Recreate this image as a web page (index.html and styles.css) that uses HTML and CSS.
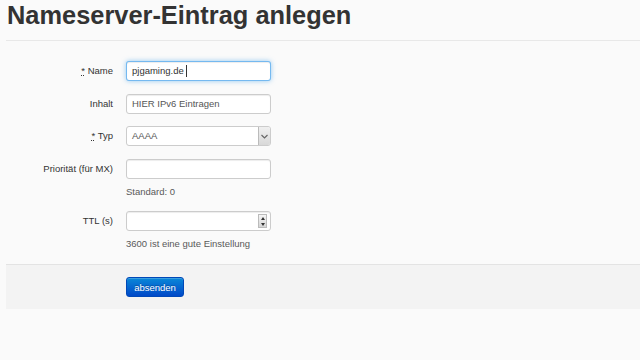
FILE: index.html
```html
<!DOCTYPE html>
<html lang="de">
<head>
  <meta charset="UTF-8">
  <meta name="viewport" content="width=device-width, initial-scale=1.0">
  <title>Nameserver-Eintrag anlegen</title>
  <link rel="stylesheet" href="styles.css">
</head>
<body>
  <div class="page">
    <h1>Nameserver-Eintrag anlegen</h1>

    <form class="form-horizontal">
      <div class="control-group">
        <label class="control-label"><abbr title="Pflichtfeld">*</abbr> Name</label>
        <div class="controls">
          <div class="input focus">pjgaming.de <span class="caret"></span></div>
        </div>
      </div>

      <div class="control-group">
        <label class="control-label">Inhalt</label>
        <div class="controls">
          <div class="input">HIER IPv6 Eintragen</div>
        </div>
      </div>

      <div class="control-group">
        <label class="control-label"><abbr title="Pflichtfeld">*</abbr> Typ</label>
        <div class="controls">
          <div class="input select">
            <span class="value">AAAA</span>
            <span class="select-arrow">
              <svg width="7" height="5" viewBox="0 0 7 5"><path d="M0.5 1 L3.5 4 L6.5 1" fill="none" stroke="#666" stroke-width="1.2"/></svg>
            </span>
          </div>
        </div>
      </div>

      <div class="control-group">
        <label class="control-label">Priorität (für MX)</label>
        <div class="controls">
          <div class="input"></div>
          <p class="help-block">Standard: 0</p>
        </div>
      </div>

      <div class="control-group">
        <label class="control-label">TTL (s)</label>
        <div class="controls">
          <div class="input number">
            <span class="spinner">
              <span class="spin-up"></span>
              <span class="spin-down"></span>
            </span>
          </div>
          <p class="help-block">3600 ist eine gute Einstellung</p>
        </div>
      </div>

      <div class="form-actions">
        <button type="button" class="btn-primary">absenden</button>
      </div>
    </form>
  </div>
</body>
</html>
```

FILE: styles.css
```css
body {
  margin: 0;
  background: #fafafa;
  font-family: "Liberation Sans", Arial, sans-serif;
  font-size: 9.5px;
  color: #333;
}
.page {
  padding-left: 6px;
}
h1 {
  margin: 0;
  padding: 1px 0 0 1px;
  font-size: 25.4px;
  line-height: 28px;
  font-weight: bold;
  color: #333;
  height: 39px;
  border-bottom: 1px solid #e8e8e8;
}
.form-horizontal {
  padding-top: 20px;
}
.control-group {
  display: flex;
  align-items: flex-start;
  margin-bottom: 12.5px;
}
.control-label {
  width: 107px;
  margin-right: 13px;
  text-align: right;
  line-height: 20px;
  color: #333;
}
abbr {
  text-decoration: underline dotted;
  border: none;
}
.controls {
  width: 145px;
}
.input {
  box-sizing: border-box;
  height: 20px;
  width: 145px;
  padding: 0 5px;
  line-height: 18px;
  background: #fff;
  border: 1px solid #ccc;
  border-radius: 3px;
  box-shadow: inset 0 1px 1px rgba(0, 0, 0, 0.075);
  color: #555;
  display: flex;
  align-items: center;
}
.focus {
  border-color: rgba(82, 168, 236, 0.8);
  box-shadow: inset 0 1px 1px rgba(0, 0, 0, 0.075), 0 0 5px rgba(82, 168, 236, 0.6);
  white-space: pre;
  color: #333;
}
.caret {
  display: inline-block;
  width: 1px;
  height: 12px;
  background: #333;
}
.select {
  padding-right: 0;
  justify-content: space-between;
  box-shadow: none;
}
.select-arrow {
  box-sizing: border-box;
  width: 12px;
  height: 18px;
  border-left: 1px solid #bbb;
  background: linear-gradient(#f0f0f0, #d8d8d8);
  border-radius: 0 2px 2px 0;
  display: flex;
  align-items: center;
  justify-content: center;
}
.number {
  justify-content: flex-end;
  padding-right: 3px;
}
.spinner {
  box-sizing: border-box;
  width: 9px;
  height: 14px;
  border: 1px solid #bbb;
  background: linear-gradient(#f5f5f5, #d5d5d5);
  display: flex;
  flex-direction: column;
  align-items: center;
  justify-content: space-around;
}
.spin-up {
  width: 0;
  height: 0;
  border-left: 2.5px solid transparent;
  border-right: 2.5px solid transparent;
  border-bottom: 3px solid #333;
}
.spin-down {
  width: 0;
  height: 0;
  border-left: 2.5px solid transparent;
  border-right: 2.5px solid transparent;
  border-top: 3px solid #333;
}
.help-block {
  margin: 6px 0 1.3px;
  line-height: 13px;
  color: #595959;
}
.form-actions {
  margin-top: 0;
  padding: 12px 0 12px 120px;
  background: #f3f3f3;
  border-top: 1px solid #e3e3e3;
}
.btn-primary {
  display: block;
  width: 58px;
  height: 20px;
  padding: 0;
  font-family: "Liberation Sans", Arial, sans-serif;
  font-size: 9.5px;
  color: #fff;
  background: linear-gradient(#0a88d8, #0048c8);
  border: 1px solid #0048b8;
  border-radius: 3px;
  box-shadow: inset 0 1px 0 rgba(255, 255, 255, 0.2);
  text-shadow: 0 -1px 0 rgba(0, 0, 0, 0.25);
}
```
